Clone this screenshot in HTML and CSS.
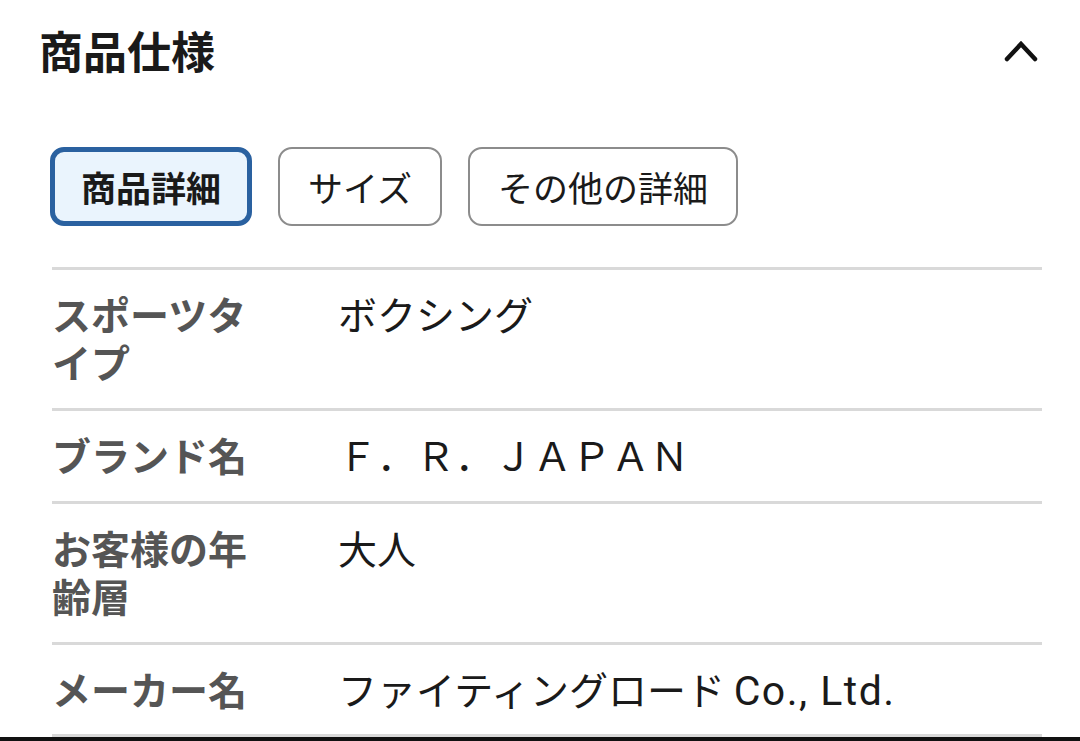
FILE: index.html
```html
<html>
<head>
    <title>商品仕様</title>
    <link rel="stylesheet" href="styles.css">
</head>
<body>
    <div class="spec">
        <div class="spec-header">
            <h2>商品仕様</h2>
            <svg class="chevron" width="40" height="30" viewBox="0 0 40 30">
                <polyline points="5,24 19,9 33,24" fill="none" stroke="#111" stroke-width="4.5" stroke-linecap="round" stroke-linejoin="miter"/>
            </svg>
        </div>
        <div class="tabs">
            <button type="button" class="tab active">商品詳細</button>
            <button type="button" class="tab">サイズ</button>
            <button type="button" class="tab">その他の詳細</button>
        </div>
        <div class="spec-table">
            <div class="row">
                <div class="label">スポーツタイプ</div>
                <div class="value">ボクシング</div>
            </div>
            <div class="row">
                <div class="label">ブランド名</div>
                <div class="value">Ｆ．Ｒ．ＪＡＰＡＮ</div>
            </div>
            <div class="row">
                <div class="label">お客様の年齢層</div>
                <div class="value">大人</div>
            </div>
            <div class="row last">
                <div class="label">メーカー名</div>
                <div class="value">ファイティングロード <span class="latin">Co., Ltd.</span></div>
            </div>
        </div>
    </div>
    <div class="screen-edge"></div>
</body>
</html>
```

FILE: styles.css
```css
body {
    font-family: "Noto Sans CJK JP", "Noto Sans", sans-serif;
    margin: 0;
    padding: 0;
    background: #fff;
    color: #111;
    height: 741px;
    overflow: hidden;
}
.spec {
    padding: 20px 38px 0 0;
    height: 737px;
    box-sizing: border-box;
    overflow: hidden;
}
.spec-header {
    display: flex;
    justify-content: space-between;
    align-items: center;
    padding-left: 39px;
    height: 60px;
}
.spec-header h2 {
    margin: 0;
    font-size: 44px;
    line-height: 60px;
    font-weight: 700;
    color: #1a1a1a;
}
.tabs {
    display: flex;
    gap: 26px;
    margin: 67px 0 0 50px;
}
.tab {
    font-family: inherit;
    font-size: 35px;
    font-weight: 400;
    height: 79px;
    padding: 0 28px;
    border: 2px solid #8c8c8c;
    border-radius: 14px;
    background: #fff;
    color: #1a1a1a;
    box-sizing: border-box;
    display: flex;
    align-items: center;
}
.tab.active {
    border: 5px solid #2a61a0;
    background: #eaf4fd;
    font-weight: 700;
    padding: 0 26px;
}
.spec-table {
    margin: 41px 0 0 52px;
}
.row {
    display: flex;
    border-top: 3px solid #d9d9d9;
    padding: 19px 0 23px;
    font-size: 39px;
    line-height: 48px;
}
.row.last {
    border-bottom: 3px solid #d9d9d9;
    padding-bottom: 19px;
}
.label {
    width: 286px;
    padding-right: 64px;
    box-sizing: border-box;
    flex-shrink: 0;
    font-weight: 700;
    color: #555;
}
.value {
    color: #1a1a1a;
}
.latin {
    font-family: Roboto, sans-serif;
    font-size: 41px;
    letter-spacing: 1.5px;
}
.screen-edge {
    height: 4px;
    background: #111;
}
```
